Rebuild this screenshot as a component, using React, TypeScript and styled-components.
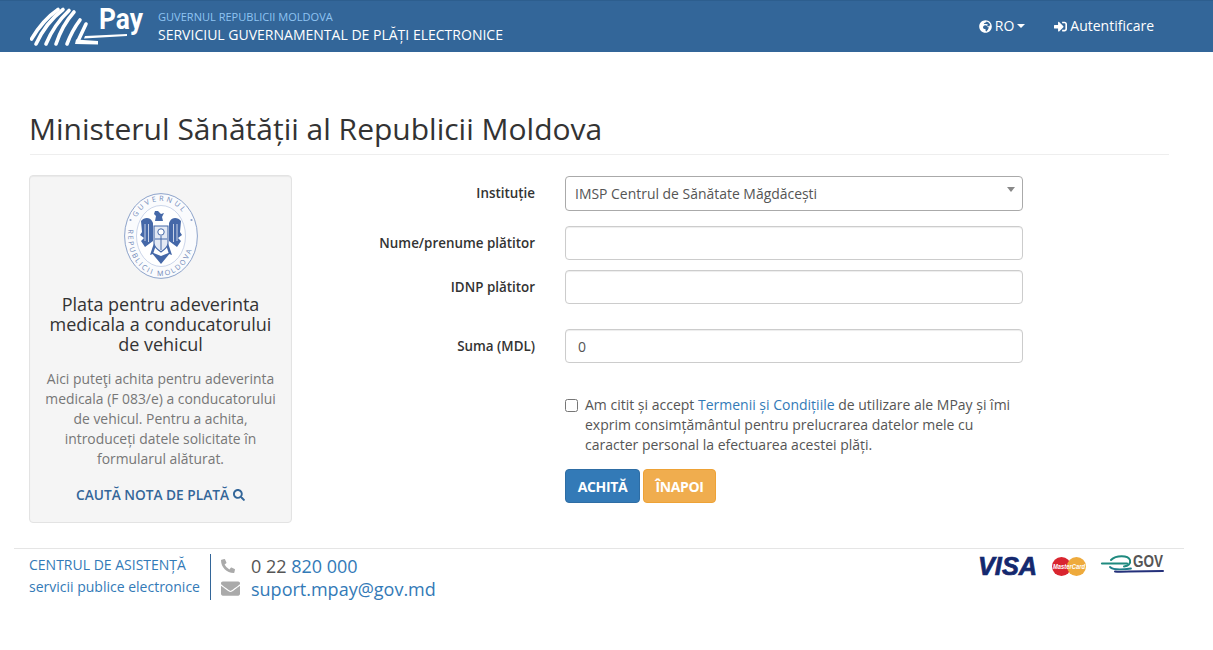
import React from "react";
import styled, { createGlobalStyle } from "styled-components";
import { FaGlobeAfrica, FaSignInAlt, FaSearch, FaPhoneAlt, FaEnvelope } from "react-icons/fa";

const Global = createGlobalStyle`
  html, body { margin: 0; padding: 0; background: #fff; }
  body { font-family: "Open Sans", "Liberation Sans", sans-serif; font-size: 14px; line-height: 20px; color: #555; }
  * { box-sizing: border-box; }
`;

const Header = styled.header`
  height: 52px;
  background: #336699;
  border-top: 1px solid #2d5e8e;
  display: flex;
  align-items: center;
  padding: 0 59px 0 30px;
  color: #fff;
`;
const LogoBox = styled.div`
  width: 128px;
  height: 48px;
  flex: none;
`;
const Brand = styled.div`
  display: flex;
  flex-direction: column;
  padding-top: 1px;
`;
const BrandTop = styled.div`
  font-size: 11.05px;
  line-height: 16px;
  color: #8fc4f2;
`;
const BrandMain = styled.div`
  font-size: 14.03px;
  line-height: 20px;
  color: #fff;
`;
const Nav = styled.nav`
  margin-left: auto;
  display: flex;
  align-items: center;
  gap: 29px;
  font-size: 14px;
  padding-bottom: 1px;
`;
const NavItem = styled.span`
  display: inline-flex;
  align-items: center;
  gap: 3px;
  color: #fff;
  svg { flex: none; }
`;
const Caret = styled.span`
  width: 0;
  height: 0;
  border-top: 4px solid #fff;
  border-left: 4px solid transparent;
  border-right: 4px solid transparent;
`;
const Main = styled.main`
  padding: 0 44px 0 30px;
`;
const Title = styled.h1`
  margin: 0;
  padding: 59px 0 5px;
  font-size: 30px;
  line-height: 36px;
  font-weight: 400;
  color: #333;
  text-indent: -1px;
  border-bottom: 1px solid #eee;
  height: 103px;
`;
const Content = styled.div`
  display: flex;
  margin-top: 20px;
  margin-left: -1px;
`;
const Panel = styled.aside`
  width: 263px;
  height: 348px;
  flex: none;
  background: #f5f5f5;
  border: 1px solid #e3e3e3;
  border-radius: 4px;
  box-shadow: inset 0 1px 1px rgba(0, 0, 0, 0.05);
  padding: 17px 14px 0;
  text-align: center;
`;
const Emblem = styled.div`
  height: 86px;
  display: flex;
  justify-content: center;
`;
const PanelTitle = styled.h3`
  margin: 15px 0 0;
  font-size: 18px;
  line-height: 20px;
  font-weight: 400;
  color: #333;
`;
const PanelText = styled.p`
  margin: 15px 0 0;
  font-size: 13.9px;
  line-height: 20px;
  color: #777;
`;
const SearchLink = styled.div`
  margin-top: 16px;
  font-size: 13.7px;
  font-weight: 600;
  color: #336699;
  display: flex;
  justify-content: center;
  align-items: center;
  gap: 4px;
`;
const Form = styled.form`
  margin-left: 30px;
  padding-top: 1px;
  width: 701px;
  display: flex;
  flex-direction: column;
`;
const Row = styled.div<{ $mb: number; $h: number }>`
  display: flex;
  align-items: center;
  height: ${(p) => p.$h}px;
  margin-bottom: ${(p) => p.$mb}px;
`;
const Label = styled.label<{ $lift?: number }>`
  width: 213px;
  text-align: right;
  font-size: 13.4px;
  font-weight: 600;
  color: #333;
  margin-right: 30px;
  flex: none;
  position: relative;
  top: ${(p) => -(p.$lift ?? 0)}px;
`;
const SelectBox = styled.div`
  width: 458px;
  height: 35px;
  border: 1px solid #aaa;
  border-radius: 4px;
  background: #fff;
  display: flex;
  align-items: center;
  justify-content: space-between;
  padding: 0 7px 0 9px;
  font-size: 13.95px;
  color: #555;
`;
const SelectCaret = styled.span`
  width: 0;
  height: 0;
  align-self: flex-start;
  margin-top: 10px;
  border-top: 5px solid #888;
  border-left: 4px solid transparent;
  border-right: 4px solid transparent;
`;
const Input = styled.input`
  width: 458px;
  height: 34px;
  border: 1px solid #ccc;
  border-radius: 4px;
  background: #fff;
  padding: 0 12px;
  font: 400 14px "Open Sans", sans-serif;
  color: #555;
  box-shadow: inset 0 1px 1px rgba(0, 0, 0, 0.075);
  outline: none;
`;
const Consent = styled.div`
  margin-left: 243px;
  display: flex;
  width: 458px;
  margin-top: 32px;
`;
const Check = styled.input`
  width: 13px;
  height: 13px;
  margin: 4px 7px 0 0;
  flex: none;
`;
const ConsentText = styled.div`
  font-size: 14px;
  line-height: 20px;
  color: #555;
  width: 438px;
`;
const TermsLink = styled.a`
  color: #337ab7;
`;
const Buttons = styled.div`
  margin: 14px 0 0 243px;
  display: flex;
  gap: 3px;
`;
const Btn = styled.button<{ $bg: string; $bd: string; $w: number }>`
  width: ${(p) => p.$w}px;
  height: 34px;
  background: ${(p) => p.$bg};
  border: 1px solid ${(p) => p.$bd};
  border-radius: 4px;
  color: #fff;
  font: 700 14px "Open Sans", sans-serif;
  letter-spacing: -0.4px;
  padding: 0;
`;
const Footer = styled.footer`
  margin: 25px 29px 0 14px;
  border-top: 1px solid #e5e5e5;
  padding: 5px 0 0 15px;
  display: flex;
  justify-content: space-between;
`;
const Help = styled.div`
  display: flex;
  align-items: flex-start;
`;
const HelpLeft = styled.div`
  font-size: 14px;
  line-height: 22px;
  color: #337ab7;
  border-right: 1px solid #336699;
  height: 46px;
  width: 182px;
  white-space: nowrap;
`;
const HelpRight = styled.div`
  display: flex;
  flex-direction: column;
  padding-left: 10px;
`;
const ContactRow = styled.div`
  display: flex;
  align-items: center;
  height: 23px;
  font-size: 18px;
  color: #555;
`;
const IconCell = styled.span`
  width: 30px;
  color: #aaa;
  display: inline-flex;
  align-items: center;
`;
const Blue = styled.span`
  color: #337ab7;
`;
const Logos = styled.div`
  width: 200px;
  height: 32px;
  margin-right: 19px;
`;

function MPayLogo() {
  return (
    <LogoBox>
      <svg width="128" height="48" viewBox="0 0 128 48">
        <g fill="none" stroke="#fff" strokeWidth="3.6" strokeLinecap="round">
          <path d="M1.5 36 C8 25 17 14 28 6.5" />
          <path d="M6 41 C12 28 22 15 33 6.5" />
          <path d="M16 41 C21 29 29 17 39 7.5" />
          <path d="M26 41 C30 29 36 18 44 9" />
          <path d="M37 41 C40 33 44 25 50 17" />
          <path d="M56 21 L48 38" strokeWidth="3.6" />
        </g>
        <path d="M46 36.5 L68 38 L68 41.5 L45 41 Z" fill="#fff" />
        <path d="M55 33 L97 31 L97 33 L54 35.5 Z" fill="#fff" />
        <text x="69" y="26" fontFamily="Roboto, 'Open Sans', sans-serif" fontWeight="700" fontSize="29" fill="#fff" textLength="44" lengthAdjust="spacingAndGlyphs">Pay</text>
      </svg>
    </LogoBox>
  );
}

function MoldovaEmblem() {
  return (
    <svg width="74" height="86" viewBox="0 0 74 86">
      <ellipse cx="37" cy="43" rx="36.4" ry="42.4" fill="#fafbfd" stroke="#8da3ca" strokeWidth="1" />
      <ellipse cx="37" cy="43" rx="24.5" ry="30.5" fill="#fff" stroke="#a9badb" strokeWidth=".6" />
      <defs>
        <path id="topArc" d="M8 43 A29 35 0 0 1 66 43" />
        <path id="botArc" d="M6.4 28 A33 40 0 1 0 67.6 28" />
      </defs>
      <text fontFamily="'Open Sans', sans-serif" fontSize="7.2" fill="#7189b8" letterSpacing="2.6">
        <textPath href="#topArc" startOffset="19%">GUVERNUL</textPath>
      </text>
      <text fontFamily="'Open Sans', sans-serif" fontSize="7.2" fill="#7189b8" letterSpacing="1.9">
        <textPath href="#botArc" startOffset="6%">REPUBLICII MOLDOVA</textPath>
      </text>
      <circle cx="6.5" cy="27" r="1.1" fill="#8da3ca" />
      <circle cx="67.5" cy="27" r="1.1" fill="#8da3ca" />
      <g fill="#4568a8">
        <path d="M31 18h3l3 3 3-1-2 4 1 4h-8l1-5-2-2z" />
        <path d="M17 28c3-4 9-4 11 0l1 2v18l-8 6-4-6 3-3-4-3 2-3z" />
        <path d="M57 28c-3-4-9-4-11 0l-1 2v18l8 6 4-6-3-3 4-3-2-3z" />
        <path d="M37 71l-10-12 10 4 10-4z" />
        <path d="M30 50l-4 12 3-1 3-9zM44 50l4 12-3-1-3-9z" />
      </g>
      <path d="M30 33h14v17c0 4-4 7-7 9-3-2-7-5-7-9z" fill="#e3e9f4" stroke="#4568a8" strokeWidth="1.1" />
      <circle cx="37" cy="39" r="3.2" fill="#fff" stroke="#4568a8" />
      <path d="M31 46h12M37 43v14" stroke="#4568a8" strokeWidth="1" fill="none" />
      <path d="M21 31v17M24.5 31v18M53 31v17M49.5 31v18" stroke="#e8edf7" strokeWidth=".8" fill="none" />
    </svg>
  );
}

function PayLogos() {
  return (
    <svg width="200" height="32" viewBox="0 0 200 32">
      <text x="13" y="21" fontFamily="'Liberation Sans', sans-serif" fontStyle="italic" fontWeight="700" fontSize="25" fill="#14286e" stroke="#14286e" strokeWidth=".7" textLength="59" lengthAdjust="spacingAndGlyphs">VISA</text>
      <circle cx="96.5" cy="12.5" r="9.5" fill="#d9252f" />
      <circle cx="111.5" cy="12.5" r="9.5" fill="#eeaa3c" />
      <text x="88" y="15" fontFamily="'Liberation Sans', sans-serif" fontStyle="italic" fontWeight="700" fontSize="6.5" fill="#fff" textLength="32" lengthAdjust="spacingAndGlyphs">MasterCard</text>
      <g fill="none" strokeLinecap="round">
        <path d="M137 9.5H162" stroke="#1f8a7f" strokeWidth="2.2" />
        <path d="M146 6C151 1 163 1 165 6C166 10 163 12 159 12.5" stroke="#1f8a7f" strokeWidth="2" />
        <path d="M145 13C148 16 156 16 166 14.5" stroke="#1f7f8a" strokeWidth="1.8" />
        <path d="M150 17.5C155 18.5 165 17 198 17" stroke="#24307a" strokeWidth="2" />
      </g>
      <text x="168" y="13" fontFamily="'Liberation Sans', sans-serif" fontWeight="700" fontSize="17" fill="#555" textLength="30" lengthAdjust="spacingAndGlyphs">GOV</text>
    </svg>
  );
}

export default function App() {
  return (
    <>
      <Global />
      <Header>
        <MPayLogo />
        <Brand>
          <BrandTop>GUVERNUL REPUBLICII MOLDOVA</BrandTop>
          <BrandMain>SERVICIUL GUVERNAMENTAL DE PLĂȚI ELECTRONICE</BrandMain>
        </Brand>
        <Nav>
          <NavItem><FaGlobeAfrica size={13} /> RO <Caret /></NavItem>
          <NavItem><FaSignInAlt size={13} /> Autentificare</NavItem>
        </Nav>
      </Header>
      <Main>
        <Title>Ministerul Sănătății al Republicii Moldova</Title>
        <Content>
          <Panel>
            <Emblem><MoldovaEmblem /></Emblem>
            <PanelTitle>Plata pentru adeverinta medicala a conducatorului de vehicul</PanelTitle>
            <PanelText>Aici puteţi achita pentru adeverinta medicala (F 083/e) a conducatorului de vehicul. Pentru a achita, introduceți datele solicitate în formularul alăturat.</PanelText>
            <SearchLink>CAUTĂ NOTA DE PLATĂ <FaSearch size={12} /></SearchLink>
          </Panel>
          <Form>
            <Row $h={35} $mb={15}>
              <Label $lift={1}>Instituție</Label>
              <SelectBox>IMSP Centrul de Sănătate Măgdăcești<SelectCaret /></SelectBox>
            </Row>
            <Row $h={34} $mb={10}>
              <Label>Nume/prenume plătitor</Label>
              <Input />
            </Row>
            <Row $h={34} $mb={25}>
              <Label>IDNP plătitor</Label>
              <Input />
            </Row>
            <Row $h={34} $mb={0}>
              <Label>Suma (MDL)</Label>
              <Input defaultValue="0" />
            </Row>
            <Consent>
              <Check type="checkbox" />
              <ConsentText>Am citit și accept <TermsLink>Termenii și Condițiile</TermsLink> de utilizare ale MPay și îmi exprim consimțământul pentru prelucrarea datelor mele cu caracter personal la efectuarea acestei plăți.</ConsentText>
            </Consent>
            <Buttons>
              <Btn type="button" $bg="#337ab7" $bd="#2e6da4" $w={75}>ACHITĂ</Btn>
              <Btn type="button" $bg="#f0ad4e" $bd="#eea236" $w={73}>ÎNAPOI</Btn>
            </Buttons>
          </Form>
        </Content>
      </Main>
      <Footer>
        <Help>
          <HelpLeft>CENTRUL DE ASISTENȚĂ<br />servicii publice electronice</HelpLeft>
          <HelpRight>
            <ContactRow><IconCell><FaPhoneAlt size={14} /></IconCell>0 22&nbsp;<Blue>820 000</Blue></ContactRow>
            <ContactRow><IconCell><FaEnvelope size={19} /></IconCell><Blue>suport.mpay@gov.md</Blue></ContactRow>
          </HelpRight>
        </Help>
        <Logos><PayLogos /></Logos>
      </Footer>
    </>
  );
}
